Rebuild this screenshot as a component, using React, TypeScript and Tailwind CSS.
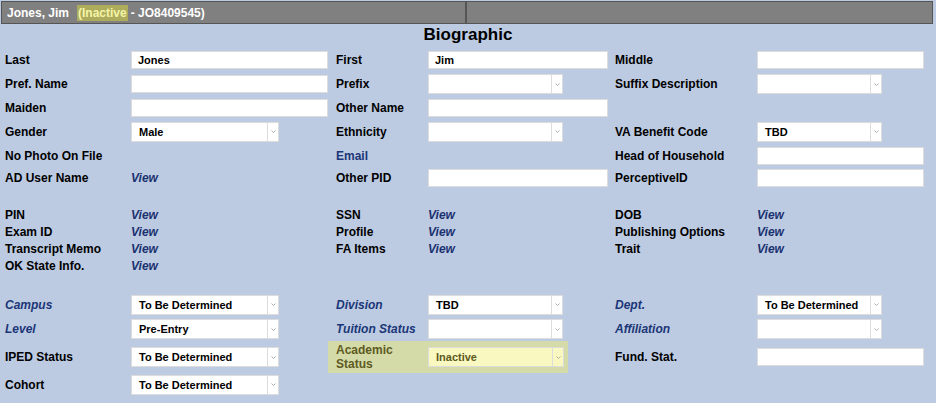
const cols = "grid grid-cols-[126px_205px_92px_187px_142px_1fr] items-center pl-[5px]";

function Label({ children, blue, italic }: { children?: React.ReactNode; blue?: boolean; italic?: boolean }) {
  return (
    <div className={`text-[12px] font-bold leading-[14px] ${blue ? "text-[#1b3677]" : "text-black"} ${italic ? "italic" : ""}`}>
      {children}
    </div>
  );
}

function TextBox({ w, value }: { w: string; value?: string }) {
  return (
    <div className={`${w} h-[18px] bg-white border border-[#dcdcdc] pl-[6px] text-[11px] font-bold leading-[16px] text-black`}>
      {value}
    </div>
  );
}

function Select({ w, value, yellow }: { w: string; value?: string; yellow?: boolean }) {
  return (
    <div className={`${w} h-[20px] flex border border-[#dcdcdc] ${yellow ? "bg-[#f8f8c0]" : "bg-white"}`}>
      <div className={`flex-1 pl-[7px] text-[11px] font-bold leading-[18px] ${yellow ? "text-[#5d5a22]" : "text-black"}`}>{value}</div>
      <div className="w-[11px] border-l border-[#dcdcdc] flex items-center justify-center">
        <svg width="5" height="3" viewBox="0 0 5 3">
          <path d="M0.5 0.5 L2.5 2.5 L4.5 0.5" fill="none" stroke="#9a9a9a" strokeWidth="0.8" />
        </svg>
      </div>
    </div>
  );
}

function View() {
  return <div className="text-[12px] font-bold italic text-[#1a3170] leading-[14px]">View</div>;
}

export default function App() {
  return (
    <div className="w-[936px] h-[403px] bg-[#bdcbe2] overflow-hidden" style={{ fontFamily: '"Liberation Sans", Arial, sans-serif' }}>
      {/* Header bar */}
      <div className="pt-px px-px">
        <div className="h-[23px] w-[932px] flex bg-[#808080] border border-[#555]">
          <div className="w-[463px] flex items-center pl-[5px] text-[12px] font-bold text-white">
            <span>Jones, Jim</span>
            <span className="ml-[8px] bg-[#acac5c] text-[#f4f4a8] px-px leading-[16px]">(Inactive</span>
            <span className="ml-[3px]">- JO8409545)</span>
          </div>
          <div className="flex-1 border-l-2 border-[#555]" />
        </div>
      </div>

      <div className="h-[24px] text-center text-[17px] font-bold text-black leading-[22px]">Biographic</div>

      {/* Name rows */}
      <div className={`${cols} h-[24px]`}>
        <Label>Last</Label>
        <TextBox w="w-[197px]" value="Jones" />
        <Label>First</Label>
        <TextBox w="w-[180px]" value="Jim" />
        <Label>Middle</Label>
        <TextBox w="w-[167px]" />
      </div>
      <div className={`${cols} h-[24px]`}>
        <Label>Pref. Name</Label>
        <TextBox w="w-[197px]" />
        <Label>Prefix</Label>
        <Select w="w-[135px]" />
        <Label>Suffix Description</Label>
        <Select w="w-[125px]" />
      </div>
      <div className={`${cols} h-[23px]`}>
        <Label>Maiden</Label>
        <TextBox w="w-[197px]" />
        <Label>Other Name</Label>
        <TextBox w="w-[180px]" />
        <div />
        <div />
      </div>
      <div className={`${cols} h-[25px]`}>
        <Label>Gender</Label>
        <Select w="w-[148px]" value="Male" />
        <Label>Ethnicity</Label>
        <Select w="w-[135px]" />
        <Label>VA Benefit Code</Label>
        <Select w="w-[125px]" value="TBD" />
      </div>
      <div className={`${cols} h-[23px]`}>
        <Label>No Photo On File</Label>
        <div />
        <Label blue>Email</Label>
        <div />
        <Label>Head of Household</Label>
        <TextBox w="w-[167px]" />
      </div>
      <div className={`${cols} h-[22px]`}>
        <Label>AD User Name</Label>
        <View />
        <Label>Other PID</Label>
        <TextBox w="w-[180px]" />
        <Label>PerceptiveID</Label>
        <TextBox w="w-[167px]" />
      </div>

      {/* View links */}
      <div className="h-[17px]" />
      <div className={`${cols} h-[17px]`}>
        <Label>PIN</Label>
        <View />
        <Label>SSN</Label>
        <View />
        <Label>DOB</Label>
        <View />
      </div>
      <div className={`${cols} h-[17px]`}>
        <Label>Exam ID</Label>
        <View />
        <Label>Profile</Label>
        <View />
        <Label>Publishing Options</Label>
        <View />
      </div>
      <div className={`${cols} h-[17px]`}>
        <Label>Transcript Memo</Label>
        <View />
        <Label>FA Items</Label>
        <View />
        <Label>Trait</Label>
        <View />
      </div>
      <div className={`${cols} h-[17px]`}>
        <Label>OK State Info.</Label>
        <View />
      </div>

      {/* Status rows */}
      <div className="h-[18px]" />
      <div className={`${cols} h-[25px]`}>
        <Label blue italic>Campus</Label>
        <Select w="w-[148px]" value="To Be Determined" />
        <Label blue italic>Division</Label>
        <Select w="w-[135px]" value="TBD" />
        <Label blue italic>Dept.</Label>
        <Select w="w-[125px]" value="To Be Determined" />
      </div>
      <div className={`${cols} h-[24px]`}>
        <Label blue italic>Level</Label>
        <Select w="w-[148px]" value="Pre-Entry" />
        <Label blue italic>Tuition Status</Label>
        <Select w="w-[135px]" />
        <Label blue italic>Affiliation</Label>
        <Select w="w-[125px]" />
      </div>
      <div className={`${cols} h-[32px]`}>
        <Label>IPED Status</Label>
        <Select w="w-[148px]" value="To Be Determined" />
        <div className="col-span-2 -ml-[8px] w-[240px] h-[32px] bg-[#d4dba8] flex items-center">
          <div className="w-[100px] pl-[8px] text-[12px] font-bold leading-[14px] text-[#5d5a22]">
            Academic
            <br />
            Status
          </div>
          <Select w="w-[136px]" value="Inactive" yellow />
        </div>
        <Label>Fund. Stat.</Label>
        <TextBox w="w-[167px]" />
      </div>
      <div className={`${cols} h-[23px]`}>
        <Label>Cohort</Label>
        <Select w="w-[148px]" value="To Be Determined" />
      </div>
    </div>
  );
}
